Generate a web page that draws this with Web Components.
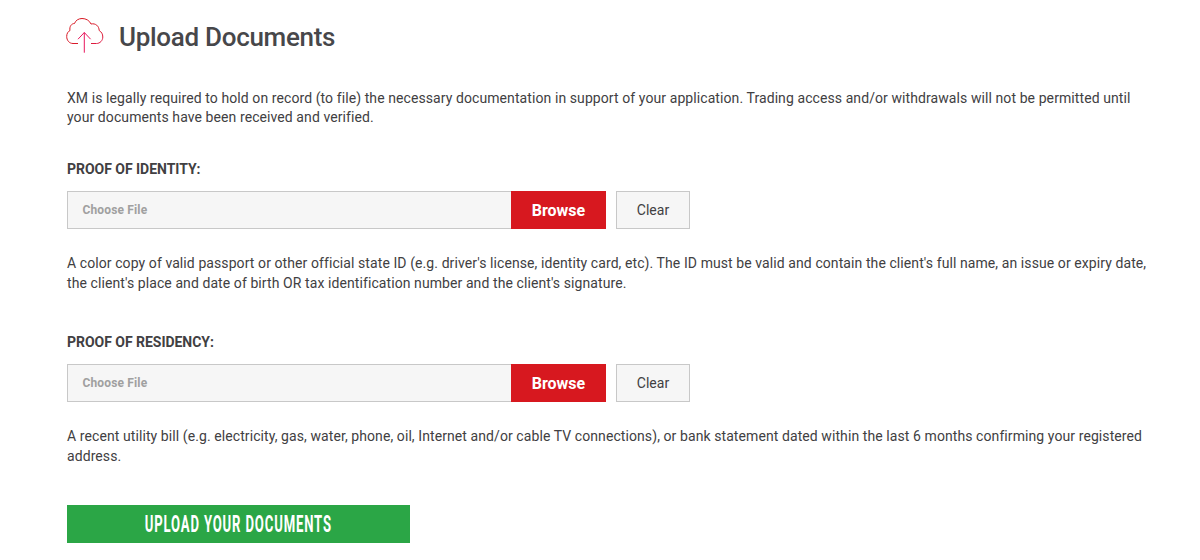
<!DOCTYPE html>
<html lang="en">
<head>
<meta charset="utf-8">
<title>Upload Documents</title>
<style>
  body { margin: 0; background: #fff; font-family: Roboto, "Liberation Sans", sans-serif; color: #414042; }
</style>
</head>
<body>
<template id="upload-heading-tpl">
  <style>
    :host { display: flex; align-items: center; height: 58px; margin-top: 8px; }
    svg { width: 38px; height: 38px; margin-left: -1px; margin-right: 15px; flex: none; }
    h2 { margin: 0; font-size: 26px; font-weight: 500; line-height: 58px; letter-spacing: -.3px; color: #47474a; }
  </style>
  <svg viewBox="0 0 38 38" fill="none" stroke-width="1">
    <defs>
      <linearGradient id="cloud" x1="0" y1="0" x2="1" y2="1">
        <stop offset="0" stop-color="#d7181f"/>
        <stop offset=".7" stop-color="#d91a2c"/>
        <stop offset="1" stop-color="#e01c4a"/>
      </linearGradient>
    </defs>
    <path stroke="url(#cloud)" d="M12 25.500H7C3 25.500.7 22 .7 18.500.7 15.500 2 13.500 4 12.500 3.200 8.500 5.500 5.500 8.500 5.500 9.500 2.500 12.500.5 16 .5c4 0 7.500 2 9 5.500 4.500-1 8 2 8.200 6.500 2.300 1.500 3.600 3.500 3.600 6.500 0 3.500-2.800 6.500-6.300 6.500H25"/>
    <path stroke="#e8175d" d="M18.300 34.700V14.500M12 21.200l6.300-6.700 6.300 6.700"/>
  </svg>
  <h2><slot></slot></h2>
</template>

<template id="file-field-tpl">
  <style>
    :host { display: block; }
    .label { font-size: 14px; font-weight: 700; line-height: 19px; letter-spacing: -.03px; color: #414042; margin-bottom: 12px; }
    .row { display: flex; height: 38px; }
    .input { box-sizing: border-box; width: 444px; display: flex; align-items: center; padding-left: 14.500px;
      background: #f6f6f6; border: 1px solid #c8c8c8; border-right: 0; font-size: 12px; font-weight: 700; letter-spacing: .15px; color: #a0a0a0; }
    .browse { width: 95px; display: flex; align-items: center; justify-content: center;
      background: #d7181f; color: #fff; font-size: 16px; font-weight: 700; }
    .clear { box-sizing: border-box; width: 74px; margin-left: 10px; display: flex; align-items: center; justify-content: center;
      background: #f6f6f6; border: 1px solid #c8c8c8; font-size: 14px; color: #414042; }
    .note { font-size: 14px; line-height: 20px; letter-spacing: .085px; margin-top: 24px; color: #414042; }
  </style>
  <div class="label"></div>
  <div class="row">
    <div class="input">Choose File</div>
    <div class="browse">Browse</div>
    <div class="clear">Clear</div>
  </div>
  <div class="note"><slot></slot></div>
</template>

<template id="submit-button-tpl">
  <style>
    :host { display: flex; width: 343px; height: 38px; background: #2ba646; align-items: center; justify-content: center; overflow: hidden; }
    span { display: inline-block; white-space: nowrap; color: #fff; font-size: 23px; font-weight: 700; letter-spacing: 1.500px; transform: scaleX(.57); }
  </style>
  <span><slot></slot></span>
</template>

<template id="upload-page-tpl">
  <style>
    :host { display: flex; flex-direction: column; box-sizing: border-box; width: 1200px; padding: 0 50px 0 67px; font-size: 14px; line-height: 19px; }
    .intro { margin-top: 23px; line-height: 19px; letter-spacing: .085px; }
    ::slotted(file-field) { margin-top: 33px; }
    ::slotted(file-field.next) { margin-top: 40px; }
    ::slotted(submit-button) { margin-top: 39px; }
  </style>
  <slot name="heading"></slot>
  <div class="intro"><slot name="intro"></slot></div>
  <slot></slot>
</template>

<upload-page>
  <upload-heading slot="heading">Upload Documents</upload-heading>
  <span slot="intro">XM is legally required to hold on record (to file) the necessary documentation in support of your application. Trading access and/or withdrawals will not be permitted until your documents have been received and verified.</span>
  <file-field label="PROOF OF IDENTITY:">A color copy of valid passport or other official state ID (e.g. driver's license, identity card, etc). The ID must be valid and contain the client's full name, an issue or expiry date, the client's place and date of birth OR tax identification number and the client's signature.</file-field>
  <file-field class="next" label="PROOF OF RESIDENCY:">A recent utility bill (e.g. electricity, gas, water, phone, oil, Internet and/or cable TV connections), or bank statement dated within the last 6 months confirming your registered address.</file-field>
  <submit-button>UPLOAD YOUR DOCUMENTS</submit-button>
</upload-page>

<script>
'use strict';

(function () {
  // plain elements that only stamp their template into an open shadow root
  function define(name, templateId) {
    customElements.define(name, class extends HTMLElement {
      constructor() {
        super();
        const shadow = this.attachShadow({ mode: 'open' });
        shadow.appendChild(document.getElementById(templateId).content.cloneNode(true));
      }
    });
  }

  define('upload-page', 'upload-page-tpl');
  define('upload-heading', 'upload-heading-tpl');
  define('submit-button', 'submit-button-tpl');

  class FileField extends HTMLElement {
    constructor() {
      super();
      const shadow = this.attachShadow({ mode: 'open' });
      shadow.appendChild(document.getElementById('file-field-tpl').content.cloneNode(true));
      shadow.querySelector('.label').textContent = this.getAttribute('label');
    }
  }

  customElements.define('file-field', FileField);
})();
</script>
</body>
</html>
